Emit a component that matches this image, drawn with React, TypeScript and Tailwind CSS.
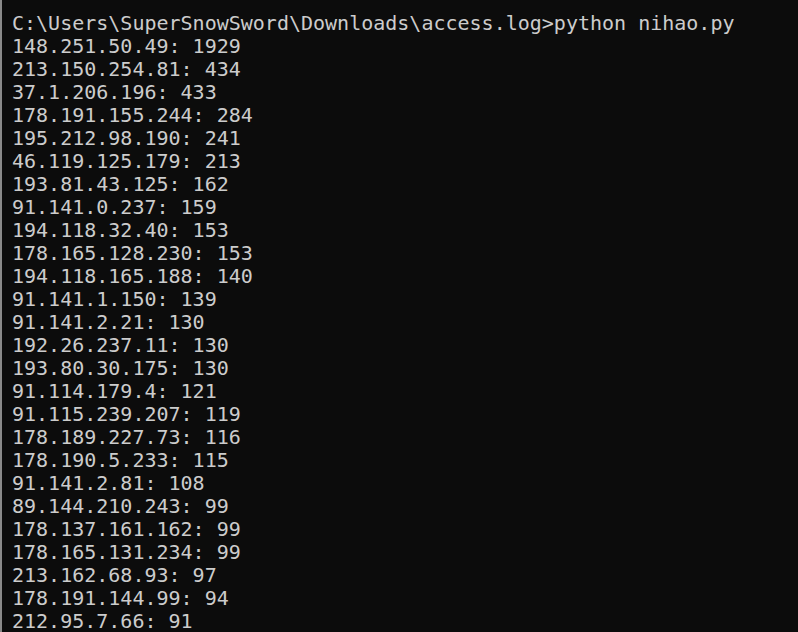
const lines = [
  'C:\\Users\\SuperSnowSword\\Downloads\\access.log>python nihao.py',
  '148.251.50.49: 1929',
  '213.150.254.81: 434',
  '37.1.206.196: 433',
  '178.191.155.244: 284',
  '195.212.98.190: 241',
  '46.119.125.179: 213',
  '193.81.43.125: 162',
  '91.141.0.237: 159',
  '194.118.32.40: 153',
  '178.165.128.230: 153',
  '194.118.165.188: 140',
  '91.141.1.150: 139',
  '91.141.2.21: 130',
  '192.26.237.11: 130',
  '193.80.30.175: 130',
  '91.114.179.4: 121',
  '91.115.239.207: 119',
  '178.189.227.73: 116',
  '178.190.5.233: 115',
  '91.141.2.81: 108',
  '89.144.210.243: 99',
  '178.137.161.162: 99',
  '178.165.131.234: 99',
  '213.162.68.93: 97',
  '178.191.144.99: 94',
  '212.95.7.66: 91',
]

export default function App() {
  return (
    <div className="flex w-[798px] h-[632px] overflow-hidden bg-[#0c0c0c]">
      {/* window edge */}
      <div className="w-[2px] shrink-0 bg-[#8a8a8a]" />
      <pre className="pl-[10px] pt-[12px] text-[20px] leading-[23px] text-[#cccccc] font-['DejaVu_Sans_Mono','Liberation_Mono',monospace]">
        {lines.map((l, i) => (
          <div key={i}>{l}</div>
        ))}
      </pre>
    </div>
  )
}
